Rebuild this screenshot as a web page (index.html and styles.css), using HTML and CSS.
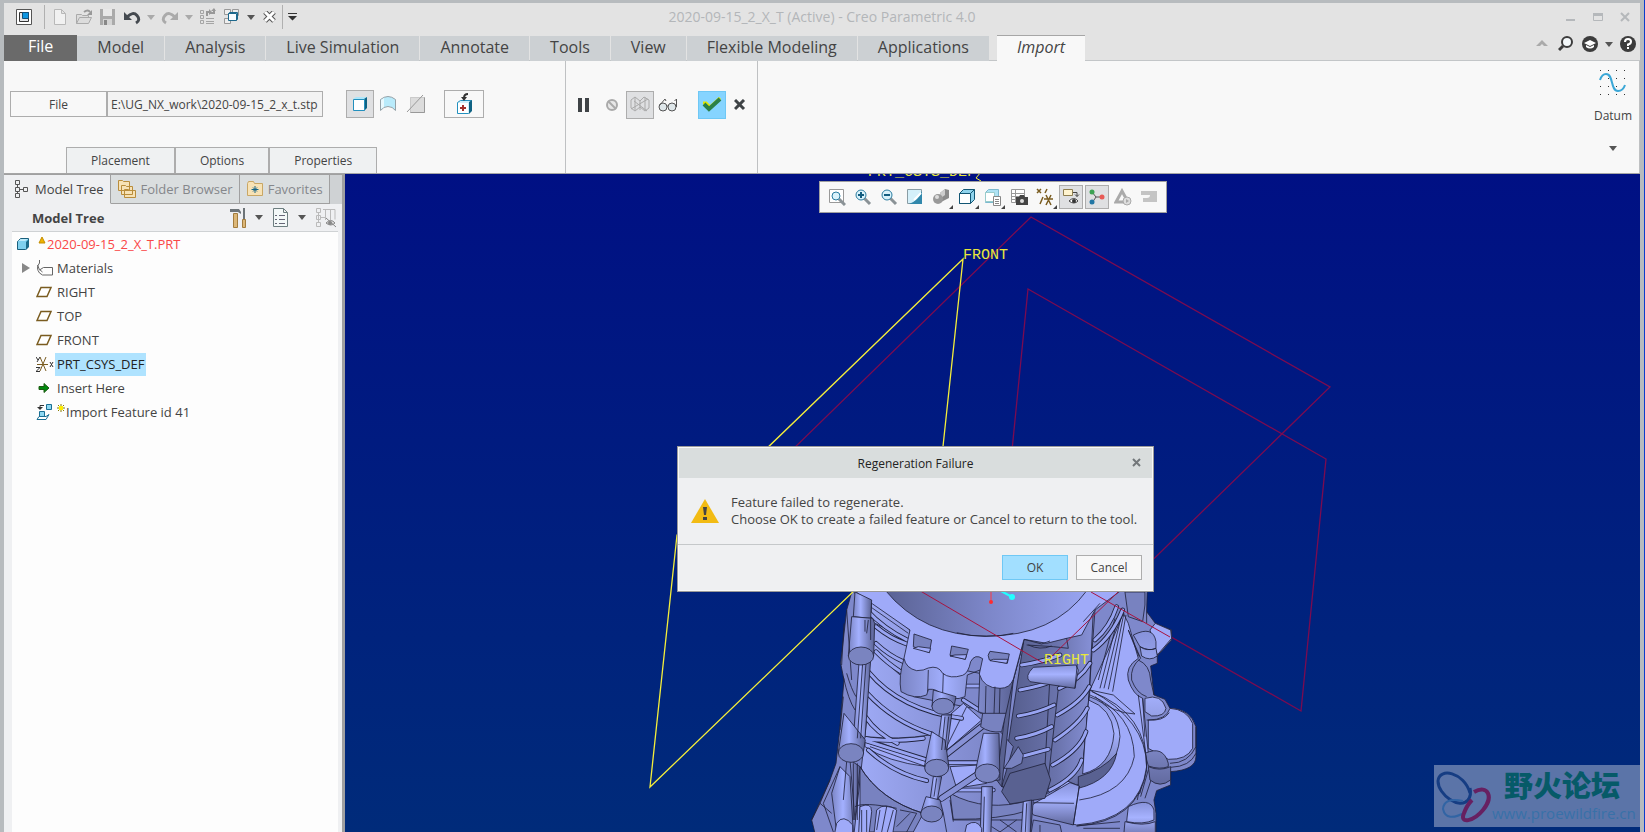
FILE: index.html
```
<!DOCTYPE html>
<html lang="en">
<head>
    <meta charset="utf-8">
    <title>2020-09-15_2_X_T (Active) - Creo Parametric 4.0</title>
    <link rel="stylesheet" href="styles.css">
</head>
<body>
<div class="app">

    <!-- Title bar -->
    <header class="titlebar">
        <div class="quick">
            <button class="q-app" aria-label="System menu"><svg width="16" height="16"><path fill="#fff" stroke="#555" d="M.5.5h15v15H.5z"/><path fill="#e4e6e8" stroke="#333" d="M3.500 3.500h9v9h-9z"/><path fill="#0d95e0" stroke="#124f78" d="M6.500 3.500h6v6h-6z"/></svg></button>
            <i class="sep"></i>
            <button aria-label="New"><svg width="16" height="18"><path fill="#f1f1f1" stroke="#b8b8b8" d="M2.500 1.500h7l4 4v11h-11zM9.500 1.500v4h4"/></svg></button>
            <button aria-label="Open"><svg width="18" height="18"><path fill="#dcdcdc" stroke="#aaa" d="M1.500 15.500v-9h5l1 1h6v2M1.500 15.500l3-6h12l-3 6z"/><path fill="none" stroke="#999" stroke-width="2" d="M9 4q4-3 6 0"/><path fill="#999" d="M17 2v5h-5z"/></svg></button>
            <button aria-label="Save"><svg width="18" height="18"><path fill="#aaa" d="M1 1h15v16H1z"/><path fill="#e8e8e8" d="M4 1h9v7H4z"/><path fill="#d4d4d4" d="M4 11h9v6H4z"/><path fill="#888" d="M5 12h3v5H5z"/></svg></button>
            <button aria-label="Undo"><svg width="18" height="16"><path fill="none" stroke="#454a50" stroke-width="3" d="M4 8q6-6 10-1.500t-1 7.500"/><path fill="#454a50" d="M1 3v8h8z"/></svg></button>
            <button class="arr" aria-label="Undo list"><svg width="8" height="5"><path fill="#aaa" d="M0 0h8L4 5z"/></svg></button>
            <button aria-label="Redo"><svg width="18" height="16"><path fill="none" stroke="#aaa" stroke-width="3" d="M14 8Q8 2 4 6.500t1 7.500"/><path fill="#aaa" d="M17 3v8H9z"/></svg></button>
            <button class="arr" aria-label="Redo list"><svg width="8" height="5"><path fill="#aaa" d="M0 0h8L4 5z"/></svg></button>
            <button aria-label="Regenerate"><svg width="18" height="18"><path fill="none" stroke="#a5a5a5" d="M1.500 2.500h3v3h-3zM1.500 7.500h3v3h-3zM1.500 12.500h3v3h-3zM7 10.500h8M7 13.500h8M7 15.500h8"/><path fill="none" stroke="#999" stroke-width="2" d="M8 8V4h3M15 1v4h-4"/><path fill="#999" d="M10 1l3 3-3 3zM12 3l5 0-2-3z"/></svg></button>
            <button aria-label="Windows"><svg width="18" height="18"><path fill="#eee" stroke="#999" d="M1.500 1.500h6v5h-6zM9.500 1.500h6v6h-6zM1.500 10.500h6v5h-6z"/><path fill="#f8fcff" stroke="#1d688c" d="M5.500 5.500h8v7h-8zM5.500 5.500l1-1h8v7l-1 1"/></svg></button>
            <button class="arr" aria-label="Window list"><svg width="8" height="5"><path fill="#555" d="M0 0h8L4 5z"/></svg></button>
            <button aria-label="Close"><svg width="14" height="12"><path fill="none" stroke="#555" stroke-width="5" d="M2 1l9 9M11 1L2 10"/><path fill="none" stroke="#fff" stroke-width="3" d="M2 1l9 9M11 1L2 10"/></svg></button>
            <i class="sep"></i>
            <button class="arr" aria-label="Customize"><svg width="10" height="8"><path fill="#333" d="M0 0h9v1H0zM0 3h9L4.500 7.500z"/></svg></button>
        </div>
        <h1>2020-09-15_2_X_T (Active) - Creo Parametric 4.0</h1>
        <div class="winctl">
            <button aria-label="Minimize"><svg width="12" height="12"><path fill="#b5b8bb" d="M1 8h9v2H1z"/></svg></button>
            <button aria-label="Maximize"><svg width="12" height="12"><path fill="none" stroke="#b5b8bb" d="M1.500 2.500h9v7h-9z"/><path fill="#b5b8bb" d="M1 2h10v3H1z"/></svg></button>
            <button aria-label="Close window"><svg width="12" height="12"><path stroke="#b5b8bb" stroke-width="2" d="M2 2l8 8M10 2l-8 8"/></svg></button>
        </div>
    </header>

    <nav class="tabs">
        <a class="file" href="#">File</a>
        <a href="#">Model</a>
        <a href="#">Analysis</a>
        <a href="#">Live Simulation</a>
        <a href="#">Annotate</a>
        <a href="#">Tools</a>
        <a href="#">View</a>
        <a href="#">Flexible Modeling</a>
        <a href="#">Applications</a>
        <a class="active" href="#">Import</a>
        <div class="help">
            <button aria-label="Collapse ribbon"><svg width="12" height="8"><path fill="#aaa" d="M0 6l6-6 6 6H8L6 4 4 6z"/></svg></button>
            <button aria-label="Search"><svg width="16" height="16"><circle cx="9" cy="6" r="5" fill="#f4f8fa" stroke="#3c3c3c" stroke-width="2"/><path stroke="#3c3c3c" stroke-width="3" d="M5 10l-4 4"/></svg></button>
            <button aria-label="Learning"><svg width="16" height="16"><circle cx="8" cy="8" r="8" fill="#3c3c3c"/><path fill="#fff" d="M2 7l6-3 6 3-6 3zM4 9l4 2 4-2v2q-4 3-8 0z"/></svg></button>
            <button class="arr" aria-label="Learning menu"><svg width="8" height="5"><path fill="#555" d="M0 0h8L4 5z"/></svg></button>
            <button aria-label="Help"><svg width="16" height="16"><circle cx="8" cy="8" r="8" fill="#3c3c3c"/><path fill="none" stroke="#fff" stroke-width="2" d="M5 6q0-3 3-3t3 2.500-3 3V10"/><path fill="#fff" d="M7 11h2v2H7z"/></svg></button>
        </div>
    </nav>

    <!-- Import dashboard -->
    <section class="ribbon">
        <div class="group source">
            <div class="row">
                <button class="filebtn" id="filebtn">File</button>
                <input type="text" aria-labelledby="filebtn" value="E:\UG_NX_work\2020-09-15_2_x_t.stp">
                <button class="tool on" aria-label="Solid"><svg width="18" height="18"><path fill="#aee6fa" d="M2 4l3-2h11v10l-3 3z"/><path fill="#0f6283" d="M13 4l3-2v11l-3 3z"/><path fill="#fff" stroke="#2390be" d="M2.500 4.500h11v11h-11z"/></svg></button>
                <button class="tool flat" aria-label="Surface"><svg width="18" height="18"><path fill="#b9ebfb" stroke="#96a2a8" d="M1.500 4.500q7.500-6 15 0v11q-3-4-7.500-4t-7.500 4z"/><path fill="#e9f9fe" d="M5 3v9l-3 2V5z"/></svg></button>
                <button class="tool flat" aria-label="Remove material"><svg width="20" height="20"><path fill="#dcdcdc" stroke="#aaa" stroke-dasharray="1 1" d="M4.500 3.500h14v15h-14z"/><path fill="none" stroke="#999" d="M1 18L17 1M4.500 18.500h14v-15"/></svg></button>
                <button class="tool wide" aria-label="Import geometry"><svg width="20" height="22"><path fill="#cfeffa" stroke="#2390be" d="M3.500 9.500l3-2h11v10l-3 3h-11z"/><path fill="#0f6283" d="M15 9l3-2v11l-3 3z"/><path fill="#fff" d="M4 10h10v10H4z"/><path fill="#a3302b" d="M8 12h2v2h2v2h-2v2H8v-2H6v-2h2z"/><path fill="none" stroke="#333" stroke-width="2" d="M10 5q0-4 4-4"/><path fill="#333" d="M7 4h6l-3 4z"/></svg></button>
            </div>
            <div class="subtabs">
                <button>Placement</button>
                <button>Options</button>
                <button>Properties</button>
            </div>
        </div>
        <div class="group actions">
            <button class="tool slim" aria-label="Pause"><svg width="12" height="14"><path fill="#3f4346" d="M0 0h4v14H0zM7 0h4v14H7z"/></svg></button>
            <button class="tool flat" aria-label="No preview"><svg width="14" height="14"><circle cx="7" cy="7" r="5" fill="#e8e8e8" stroke="#aaa" stroke-width="2"/><path stroke="#aaa" stroke-width="2" d="M3 3l8 8"/></svg></button>
            <button class="tool on" aria-label="Feature preview"><svg width="20" height="18"><path fill="none" stroke="#aaa" d="M1 4l4-3 5 4 4-4 5 3v8l-4 3-5-4-5 4-4-3zM5 1v13M10 5v9M15 1v13M1 13L18 3M4 5l13 10"/></svg></button>
            <button class="tool flat" aria-label="Verify"><svg width="20" height="14"><circle cx="5" cy="9" r="4" fill="#dfe7ea" stroke="#555"/><circle cx="14" cy="9" r="4" fill="#dfe7ea" stroke="#555"/><path fill="none" stroke="#555" d="M1 8l6-7 1 2M9 8h1M18.500 9V1l-2 2"/></svg></button>
            <button class="tool ok" aria-label="Accept"><svg width="20" height="16"><path fill="none" stroke="#e4e800" stroke-width="3" d="M1 6h3l4 4 10-9"/><path fill="none" stroke="#2b8049" stroke-width="4" d="M2 7l5 5L18 2"/></svg></button>
            <button class="tool slim" aria-label="Quit"><svg width="12" height="12"><path stroke="#3f4346" stroke-width="3" d="M1 1l9 9M10 1L1 10"/></svg></button>
        </div>
        <div class="group datum">
            <button>
                <svg width="28" height="28"><path stroke="#333" stroke-dasharray="1 7" d="M1 1.500h26M1 9.500h26M1 17.500h26M1 25.500h26"/><path fill="none" stroke="#3ba7d6" stroke-width="2" d="M1 11Q3 5 7 5c8 0 4 17 12 17q5 0 7-6"/></svg>
                <span>Datum</span>
                <svg width="8" height="5"><path fill="#555" d="M0 0h8L4 5z"/></svg>
            </button>
        </div>
    </section>

    <div class="work">
        <!-- Navigator -->
        <aside class="navigator">
            <div class="navtabs">
                <button class="active"><svg width="15" height="20"><path fill="none" stroke="#555" d="M1.500 1.500h4v4h-4zM1.500 8.500h4v4h-4zM1.500 14.500h4v4h-4zM9.500 8.500h4v4h-4zM3.500 5.500v3M3.500 12.500v2M5.500 10.500h4"/></svg>Model Tree</button>
                <button><svg width="20" height="20"><path fill="#f7e2b5" stroke="#b98d3c" d="M1.500 1.500h4l1 1h6v9h-11zM4.500 6.500h4l1 1h6v8h-11zM7.500 10.500h4l1 1h6v7h-11z"/></svg>Folder Browser</button>
                <button><svg width="18" height="18"><path fill="#f7e2b5" stroke="#c9a765" d="M1.500 3.500l1-2h5l1 2h8v12h-15z"/><path stroke="#146487" d="M9 6v7M5.500 9.500h7M7 7.500l4 4M11 7.500l-4 4"/></svg>Favorites</button>
            </div>
            <div class="navhead">
                <h2>Model Tree</h2>
                <button aria-label="Settings"><svg width="18" height="22"><path fill="#dcb778" stroke="#a37c3d" d="M4.500 6.500h4v14h-4zM13.500 12.500h3v8h-3z"/><path fill="#6d7478" d="M1 2h9l2 3v2l-3-2H1zM14 1h2v11h-2z"/></svg></button>
                <button class="arr" aria-label="Settings menu"><svg width="8" height="5"><path fill="#555" d="M0 0h8L4 5z"/></svg></button>
                <button aria-label="Display"><svg width="18" height="22"><path fill="#f3f8f8" stroke="#6d7e80" d="M1.500 1.500h10l4 4v14h-14zM11.500 1.500v4h4"/><path stroke="#667" d="M7 8.500h6M7 12.500h6M7 16.500h6M3 8.500h2M3 12.500h2M3 16.500h2"/></svg></button>
                <button class="arr" aria-label="Display menu"><svg width="8" height="5"><path fill="#555" d="M0 0h8L4 5z"/></svg></button>
                <button class="last" aria-label="Hide items"><svg width="22" height="22"><path fill="none" stroke="#bbb" d="M1.500 1.500h4v4h-4zM1.500 8.500h4v4h-4zM1.500 15.500h4v4h-4zM3.500 6v10M6 10.500h4M8 2.500h12v10M10.500 3v10M15.500 3v10"/><path fill="#ddd" stroke="#888" d="M11 16q5-5 9 0-4 4-9 0zM11 11l10 9"/><circle cx="15" cy="16" r="2" fill="#888"/></svg></button>
            </div>
            <ul class="tree">
                <li class="root"><svg class="icon" width="14" height="14"><path fill="#7fd0ee" stroke="#1a5f7c" d="M1.500 4.500l3-3h8v8l-3 3h-8z"/><path fill="#bdeafa" d="M2 4l3-2h7l-3 2z"/><path fill="#1b6b8a" d="M10 5l3-3v8l-3 3z"/></svg><svg class="badge" width="8" height="8"><path fill="#f0b400" stroke="#c48d00" d="M4 1l3 6H1z"/></svg>2020-09-15_2_X_T.PRT</li>
                <li><svg class="expand" width="8" height="10"><path fill="#888" d="M0 0l8 5-8 5z"/></svg><svg class="icon" width="18" height="18"><path fill="none" stroke="#666" d="M3.500 1v3q-4 5 0 10l3 2h10V8.500h-9L3.500 11M1.500 6q1 5 5 7"/></svg>Materials</li>
                <li><svg class="icon" width="18" height="12"><path fill="#fff" stroke="#7a5c20" stroke-width="1.500" d="M5 1.500h10l-4 9H1z"/></svg>RIGHT</li>
                <li><svg class="icon" width="18" height="12"><path fill="#fff" stroke="#7a5c20" stroke-width="1.500" d="M5 1.500h10l-4 9H1z"/></svg>TOP</li>
                <li><svg class="icon" width="18" height="12"><path fill="#fff" stroke="#7a5c20" stroke-width="1.500" d="M5 1.500h10l-4 9H1z"/></svg>FRONT</li>
                <li><svg class="icon" width="18" height="18"><path fill="none" stroke="#7a5c20" d="M1 9.500h11M4 2l6 14M10 2L4 16"/><path fill="none" stroke="#333" d="M0 2l2 3M4 2L1 7M0 12.500h4l-4 4h4M14 7l3 5M17 7l-3 5"/></svg><span class="sel">PRT_CSYS_DEF</span></li>
                <li><svg class="icon" width="18" height="12"><path fill="#008a0e" stroke="#1c5a12" d="M3 4.500h5v-3l5 4.500-5 4.500v-3H3z"/></svg>Insert Here</li>
                <li><svg class="icon" width="18" height="18"><path fill="#8ed8f2" stroke="#1a6f94" d="M10.500 1.500h5v5h-5zM3.500 8.500h5v5h-5z"/><path fill="#fff" stroke="#1a6f94" d="M1 16.500l2-3h7l3-2-3 5z"/><path fill="none" stroke="#333" d="M8 2.500H4v3"/><path fill="#333" d="M1 4h6L4 7z"/></svg><svg class="badge" width="8" height="8"><path stroke="#8a7d00" d="M4 0v8M0 4h8M1 1l6 6M7 1L1 7"/><path fill="#ffee00" d="M2 2h4v4H2z"/></svg>Import Feature id 41</li>
            </ul>
        </aside>

        <!-- Graphics area -->
        <main class="viewport">
            <svg class="scene" viewBox="345 174 1295 658" preserveAspectRatio="xMidYMid slice">
                <defs>
                    <linearGradient id="bore"><stop offset="0" stop-color="#5a6294"/><stop offset=".5" stop-color="#7c86c8"/><stop offset="1" stop-color="#98a4f0"/></linearGradient>
                    <linearGradient id="tube"><stop offset="0" stop-color="#7a84c4"/><stop offset=".4" stop-color="#a3b0ff"/><stop offset="1" stop-color="#5a6294"/></linearGradient>
                    <linearGradient id="barrel"><stop offset="0" stop-color="#a0acf8"/><stop offset="1" stop-color="#727bba"/></linearGradient>
                    <linearGradient id="side"><stop offset="0" stop-color="#525a88"/><stop offset=".6" stop-color="#6a73ac"/><stop offset="1" stop-color="#8791d8"/></linearGradient>
                    <linearGradient id="boss" x2="0" y2="1"><stop offset="0" stop-color="#8792da"/><stop offset=".4" stop-color="#a6b2ff"/><stop offset="1" stop-color="#626a9f"/></linearGradient>
                    <path class="bar" id="ribs-left" d="M200 90Q250 145 325 182M228 140Q270 175 320 192M228 190Q265 225 310 245M228 215Q262 250 302 275M205 275Q300 390 485 415M202 340Q280 425 395 462M196 410Q230 460 292 490M195 475Q260 488 370 475M205 510Q280 580 380 602M190 480L375 538M440 548H530M470 630H580M490 360L545 395M500 318H550"/>
                    <path class="bar" id="ribs-right" d="M665 255Q730 245 780 225M660 330Q725 318 752 305M655 408Q715 398 762 375M650 475Q710 465 755 440M670 528L745 508M778 325Q840 300 870 250M772 405Q845 365 868 320M765 480Q840 430 862 385M758 555Q840 510 858 455M750 630Q830 590 845 540M885 180Q930 140 950 80M880 210Q935 170 968 90"/>
                    <path class="bar" id="struts" d="M545 440L430 530M545 575L425 655"/>
                </defs>
                <g class="csys">
                    <text x="868" y="176">PRT_CSYS_DEF</text>
                    <path d="M975 172h6l-5 6 5 3"/>
                </g>
                <path class="plane-r" d="M1031 217L1330 387 1047 663 748 493zM1028 289L1326 459 1301 711 1003 541z"/>

                <!-- imported casting -->
                <g class="part" transform="translate(800 580) scale(.3333)">
                    <path class="base" d="M160 20L140 90 122 250 132 300 118 460 108 550 90 600 35 720 50 780H1068V700L1062 660 1070 632 1112 615V575Q1188 570 1188 530V440Q1170 385 1110 385L1095 358 1062 345 1052 258 1072 250V228L1115 180V150L1066 130 1040 95 1042 20z"/>
                    <!-- pads and bosses on the right -->
                    <path class="lite" d="M1050 150L1066 130 1112 150 1115 175 1072 225zM1045 420Q1100 420 1110 385 1160 388 1178 430V505Q1160 540 1105 538L1045 505z"/>
                    <path class="line" d="M1188 440V500Q1165 550 1110 550M1188 520Q1170 560 1112 562"/>
                    <path class="mid" d="M975 36H1035V75L1028 125 985 110z"/>
                    <path class="lite" d="M985 130L1015 235Q975 260 985 300 1000 345 1028 355L1045 520 1020 640H900L870 330 925 210 970 100z"/>
                    <path class="line" d="M985 150L1022 235Q990 260 995 300 1010 340 1040 350M1015 240Q1050 255 1052 300L1062 345M1028 355L1035 470M1015 345L1040 540M965 105L912 325M955 110L900 325M945 115L895 300M972 100L925 328M978 105L938 335M985 150Q1000 190 1018 230M1040 420Q1090 425 1108 398M1040 95V130M1030 570L1012 660M1045 570L1022 650M1060 580L1035 655"/>
                    <path fill="url(#boss)" d="M1000 165Q1060 135 1068 185V205Q1040 215 1020 200zM1020 200Q1050 215 1068 205L1072 228Q1050 245 1025 228zM1035 355Q1085 340 1098 385 1095 410 1055 408L1035 395zM1035 520Q1090 495 1105 550V560Q1080 570 1045 558zM1045 560Q1080 575 1112 560V600Q1080 625 1050 600z"/>
                    <!-- side barrel -->
                    <path fill="url(#side)" d="M672 178L800 175 880 90 868 340 850 560 745 640 605 620z"/>
                    <path class="line" d="M885 90L868 330 852 540M778 300L740 640M750 290L735 560"/>
                    <!-- round cover -->
                    <path class="lite" d="M870 330Q1040 420 1040 560 1020 720 830 735L700 700 800 600 850 540z"/>
                    <path fill="url(#boss)" d="M868 350Q955 380 960 470 950 590 830 615L795 600 850 545z"/>
                    <path class="lite" d="M866 360Q935 385 942 460 935 560 848 582L855 480z"/>
                    <path class="line" d="M870 345Q1000 400 1003 530 980 640 838 660M875 335Q1045 400 1040 570 1015 725 830 738M870 330L940 345 1005 402Q940 400 885 350"/>
                    <path class="dark" d="M835 590Q910 570 950 520 935 600 835 625z"/>
                    <path fill="url(#boss)" d="M985 680Q1050 650 1062 690V720Q1030 735 980 725zM975 725Q1030 740 1066 725V780H970z"/>
                    <path fill="url(#boss)" d="M700 672L810 608 838 618 820 735 700 705Q688 690 700 672z"/>
                    <path class="line" d="M838 618L820 735M700 668L822 670"/>
                    <!-- main barrel -->
                    <path fill="url(#barrel)" d="M215 60L330 150 340 350 545 390 640 500 605 620 700 660 690 780H160L200 420z"/>
                    <path class="lite" d="M195 470L375 540 380 560Q260 545 195 500zM450 560L540 555 560 610 470 625zM490 370L545 420 430 520 455 400z"/>
                    <path class="mid" d="M180 560Q240 660 370 700L340 756H180zM450 640Q560 700 690 660V720H460z"/>
                    <path class="line" d="M180 560Q240 660 370 700M460 718Q600 720 690 690M225 130L330 180M228 220L300 285M195 470Q300 480 390 465M210 500L378 560M455 400L430 520M500 380L430 520M450 660L460 725"/>
                    <use href="#ribs-left" class="rib-edge"/><use href="#ribs-left" class="rib"/>
                    <use href="#ribs-right" class="rib-edge"/><use href="#ribs-right" class="rib"/>
                    <use href="#struts" class="strut-edge"/><use href="#struts" class="strut"/>
                    <path class="dark" d="M630 580L735 550 752 600 735 655 630 672 605 635z"/>
                    <path class="dark" d="M672 178L640 300 605 620 590 600 625 325 640 300z"/>
                    <path class="mid" d="M655 500L670 525 665 550 635 565 612 565z"/>
                    <!-- flange with bore -->
                    <path fill="url(#tube)" d="M312 235Q295 290 303 335 345 360 380 345L385 328Q410 325 425 345 460 365 495 350L502 285 540 270 535 395Q580 415 618 400L640 300z"/>
                    <path class="lite" d="M160 30L218 72 330 150 312 235Q318 265 350 272 372 272 385 264 415 255 428 280 450 298 488 286 505 280 512 245 525 220 548 236L538 282Q550 325 600 325 630 325 640 298L672 178 740 190 800 175 845 165 885 90 965 30z"/>
                    <path fill="url(#bore)" class="bore" d="M255 30Q370 170 560 168 760 170 862 30z"/>
                    <path class="line" d="M470 158Q555 180 640 160M585 320L582 405M558 318L556 400M385 270L383 335M430 280L428 340M600 325L598 405M160 36L218 85 325 160M672 178L725 192 750 183M800 175L805 205 760 200 680 195M850 125L900 70M685 195Q720 212 755 198"/>
                    <path class="mid" d="M342 162L395 180 388 218 340 200zM455 198L505 208 496 238 450 226zM570 214L628 222 622 250 568 240Q560 225 570 214z"/>
                    <path class="lite" d="M355 200L392 205 388 218 340 205zM465 225L500 224 496 238 450 228zM580 238L624 238 620 250 570 242z"/>
                    <!-- bolt columns -->
                    <path fill="url(#tube)" d="M165 36L215 60 212 115 160 110z"/>
                    <path fill="url(#tube)" d="M155 110L145 228H221L224 130 218 115z"/>
                    <path fill="url(#tube)" d="M177 250L160 475H195L212 240z"/>
                    <path fill="url(#tube)" d="M132 400L115 518H190L196 480z"/>
                    <path fill="url(#tube)" d="M150 540L165 720 180 560zM120 560L95 640 110 756 160 756 150 590z"/>
                    <path fill="url(#tube)" d="M425 405L412 505 440 515 455 405z"/>
                    <path fill="url(#tube)" d="M400 330L396 380H462L468 350z"/>
                    <path fill="url(#tube)" d="M395 455L373 560H447L435 480z"/>
                    <path fill="url(#tube)" d="M400 590L390 660H412L425 590z"/>
                    <path fill="url(#tube)" d="M378 650L362 700H430L420 660z"/>
                    <path fill="url(#tube)" d="M550 460L526 575Q560 610 600 600L597 460z"/>
                    <path class="mid" d="M548 400L542 440Q570 460 605 455L618 400z"/>
                    <path fill="url(#tube)" d="M670 665L662 780H690L695 660z"/>
                    <path fill="url(#tube)" d="M545 620L540 780H572L578 620z"/>
                    <path class="line" d="M205 120L200 160M212 115V180M195 120V155M188 250L172 475M198 250L182 475M140 90L155 300M132 130L125 255M130 290Q145 360 165 390M140 280Q155 330 168 350M130 350L120 450M140 545L130 660M160 550V720M172 550V720M435 410L425 510M446 410L435 510M410 595L402 650M553 650L550 756M680 670L676 756M120 560L70 670 100 756M90 600L60 670M60 670L95 700M35 720L60 670"/>
                    <g class="caps">
                        <ellipse cx="183" cy="228" rx="38" ry="27"/>
                        <ellipse cx="153" cy="519" rx="38" ry="28"/>
                        <ellipse cx="429" cy="379" rx="33" ry="24"/>
                        <ellipse cx="410" cy="564" rx="36" ry="26"/>
                        <ellipse cx="395" cy="702" rx="33" ry="24"/>
                        <ellipse cx="562" cy="580" rx="37" ry="28"/>
                    </g>
                    <!-- lower bosses -->
                    <path class="lite" d="M110 730Q130 700 158 735V780H100zM180 680Q215 665 215 695L205 780H175zM230 690Q255 665 290 690L275 780H220zM500 735Q530 715 545 745V780H490z"/>
                    <path class="mid" d="M700 720L780 735 790 780H690z"/>
                    <path class="line" d="M185 690V756M200 690V756M240 690L230 750M260 680L245 756M280 690L262 756M300 690L350 700 320 756M290 740L330 700M165 680Q190 665 290 685M430 700L440 756M575 740L600 756M600 720L650 756M650 720L600 756M720 735V756M830 738L960 725M850 745H960"/>
                    <!-- boss beside the RIGHT label -->
                    <path fill="url(#boss)" d="M700 262L828 255 835 270 825 325 690 305Q672 290 700 262z"/>
                    <path class="line" d="M832 250L825 325"/>
                </g>

                <!-- datum planes -->
                <path class="plane-y" d="M963 259L677 535 650 787 936 512z"/>
                <path class="plane-hot" d="M917 589L1043 663M1050 658L1118 592M1091 592L1170 637"/>
                <path stroke="#ff3b40" d="M991 580v22"/><circle cx="991" cy="602" r="2" fill="#ff2b30"/>
                <path stroke="#2ff" stroke-width="2" d="M990 585l22 12"/><circle cx="1012" cy="597" r="3" fill="#2ff"/>
                <g class="csys"><text x="963" y="259">FRONT</text><text x="1044" y="664">RIGHT</text></g>
            </svg>

            <div class="viewbar">
                <button aria-label="Refit"><svg width="18" height="18"><path fill="#fff" stroke="#999" d="M1.500 1.500h14v13h-14z"/><path stroke="#8a9296" stroke-width="3" d="M11 11l6 6"/><circle cx="8" cy="8" r="4" fill="#d9f2fb" stroke="#2a7ca0"/></svg></button>
                <button aria-label="Zoom in"><svg width="18" height="18"><path stroke="#8a9296" stroke-width="3" d="M10 10l6 6"/><circle cx="7" cy="7" r="5" fill="#d9f2fb" stroke="#2a7ca0"/><path stroke="#125d80" stroke-width="2" d="M4 7h6M7 4v6"/></svg></button>
                <button aria-label="Zoom out"><svg width="18" height="18"><path stroke="#8a9296" stroke-width="3" d="M10 10l6 6"/><circle cx="7" cy="7" r="5" fill="#d9f2fb" stroke="#2a7ca0"/><path stroke="#125d80" stroke-width="2" d="M4 7h6"/></svg></button>
                <button aria-label="Repaint"><svg width="18" height="18"><path fill="#d5f0fa" stroke="#8a9da5" d="M1.500 1.500h14v14h-14z"/><path fill="#3188ac" d="M16 3v13H3q9-3 13-13z"/><path stroke="#fff" stroke-width="2" d="M8 12l7-7"/></svg></button>
                <button class="more" aria-label="Display style"><svg width="18" height="18"><path fill="#8a8a8a" d="M8 5l5-4 4 1v8l-8 4z"/><path fill="#ccc" d="M8 5l5-4v6l-4 3z"/><circle cx="6" cy="11" r="5" fill="#999"/><circle cx="5" cy="9" r="2" fill="#ddd"/></svg></button>
                <button class="more" aria-label="Saved orientations"><svg width="18" height="18"><path fill="#8fd3ec" stroke="#125674" d="M1.500 5.500l4-4h11v10l-4 4h-11zM12.500 5.500l4-4"/><path fill="#fff" stroke="#125674" d="M1.500 5.500h11v10h-11z"/></svg></button>
                <button class="more" aria-label="View manager"><svg width="18" height="18"><path fill="#aee2f4" stroke="#7cb9cf" d="M1.500 4.500l3-3h10v10l-3 3h-10z"/><path fill="#fff" stroke="#9cc" d="M1.500 4.500h9v9h-9z"/><path fill="#fff" stroke="#888" d="M9.500 8.500h7v9h-7zM11 11.500h4M11 13.500h4M11 15.500h4"/></svg></button>
                <button aria-label="Capture"><svg width="18" height="18"><path fill="#fff" stroke="#999" d="M1.500 1.500h13v13h-13zM1.500 5.500h13M5.500 1.500v13M1.500 8.500h13M1.500 11.500h13"/><path fill="#444" d="M6 9h3l1-2h4l1 2h3v8H6z"/><circle cx="12" cy="13" r="2" fill="#ddd"/></svg></button>
                <button class="more" aria-label="Datum display"><svg width="18" height="18"><path fill="none" stroke="#7a5c20" stroke-width="1.500" d="M1 1l4 4M5 1L1 5M11 1L9 5M7 9l-3 7M8 11h9M10 7l5 10M15 7l-5 10"/></svg></button>
                <button class="on" aria-label="Annotation display"><svg width="18" height="18"><path fill="#fff4cf" stroke="#8f7f50" d="M1.500 1.500h9v6h-9z"/><path fill="none" stroke="#444" d="M11 4.500h4v4M13 6.500l2 2 2-2"/><path fill="#fff" stroke="#444" d="M7 13q5-5 9 0-4 4-9 0z"/><circle cx="12" cy="13" r="2" fill="#333"/></svg></button>
                <button class="on" aria-label="Spin center"><svg width="18" height="18"><path fill="none" stroke="#555" d="M4 4l4 5-4 6M8 9h7"/><circle cx="4" cy="4" r="2.500" fill="#3da254"/><circle cx="4" cy="14" r="2.500" fill="#2277a5"/><circle cx="14" cy="9" r="2.500" fill="#e85a55"/></svg></button>
                <button aria-label="Simulate"><svg width="18" height="18"><path fill="none" stroke="#aaa" stroke-width="3" d="M8 3l6 11H2z"/><circle cx="13" cy="13" r="4" fill="#ddd" stroke="#aaa"/><path fill="#aaa" d="M12 11l3 2-3 2z"/></svg></button>
                <button aria-label="Clip"><svg width="18" height="18"><path fill="#c4c4c4" d="M1 3h16v11H3v-4h4q3 0 3-3H1z"/></svg></button>
            </div>

            <div class="watermark">
                <svg width="58" height="58" viewBox="0 0 58 58"><path fill="none" stroke="#163d83" stroke-width="3" d="M36 25C30 4 5-1 4 13c0 14 22 29 30 19 3-4 3-8 2-12"/><path fill="none" stroke="#3164a4" stroke-width="2" d="M29 33q-19-4-20 8 3 14 23 3"/><path fill="none" stroke="#672061" stroke-width="4" d="M40 24c14-8 20 5 9 18-9 11-24 15-19 3q3-8 8-13"/></svg>
                <div><strong>野火论坛</strong><span>www.proewildfire.cn</span></div>
            </div>

            <div class="dialog" role="dialog" aria-labelledby="dlg-title">
                <div class="dlg-title"><h3 id="dlg-title">Regeneration Failure</h3><button aria-label="Close"><svg width="10" height="10"><path stroke="#73777a" stroke-width="2" d="M1 1l7 7M8 1L1 8"/></svg></button></div>
                <div class="dlg-body">
                    <svg width="28" height="24"><path fill="#f2bb14" d="M14 0l14 24H0z"/><path fill="#444" d="M12 8h4l-1 8h-2zM12 18h4v3h-4z"/></svg>
                    <p>Feature failed to regenerate.<br>Choose OK to create a failed feature or Cancel to return to the tool.</p>
                </div>
                <div class="dlg-foot"><button class="primary">OK</button><button>Cancel</button></div>
            </div>
        </main>
    </div>
</div>
</body>
</html>
```

FILE: styles.css
```
* {
    box-sizing: border-box;
}

body {
    margin: 0;
    background: #0a3ccc;
    color: #444;
    font-family: "Open Sans", "Noto Sans CJK SC", sans-serif;
    font-size: 12px;
}

h1, h2, h3, p, ul {
    margin: 0;
    padding: 0;
}

button {
    padding: 0;
    border: 0;
    background: none;
    color: inherit;
    font: inherit;
}

a {
    color: inherit;
    text-decoration: none;
}

svg {
    display: block;
    flex: none;
}

.app {
    display: flex;
    flex-direction: column;
    height: 100vh;
    margin-right: 1px;
    border: solid #b7bbbe;
    border-width: 3px 4px 0;
    background: #e3e3e3;
    overflow: hidden;
}

/* Title bar */
.titlebar {
    display: grid;
    grid-template-columns: 1fr auto 1fr;
    height: 32px;
    align-items: start;
}

.titlebar h1 {
    color: #b3b6b9;
    font-size: 14px;
    font-weight: normal;
    line-height: 28px;
}

.quick, .winctl, .help {
    display: flex;
    align-items: center;
    height: 28px;
}

.quick button, .winctl button, .help button, .navhead button {
    display: flex;
    justify-content: center;
    align-items: center;
    width: 24px;
}

.quick button.arr, .help button.arr, .navhead button.arr {
    width: 14px;
}

.quick .q-app {
    width: 40px;
}

.sep {
    width: 1px;
    height: 24px;
    margin-right: 3px;
    background: #b0b0b0;
}

.winctl {
    justify-content: flex-end;
    padding-right: 2px;
}

.winctl button {
    width: 27px;
}

/* Ribbon tabs */
.tabs {
    display: flex;
    align-items: stretch;
    height: 26px;
    box-shadow: inset 0 -1px #c3c6c8;
}

.tabs a {
    margin: 1px 1px 0 0;
    padding: 0 20px;
    background: #ccd0d3;
    font-size: 16px;
    line-height: 23px;
}

.tabs .file {
    margin: 0;
    padding: 0 24px;
    background: #6a6a6a;
    color: #fff;
}

.tabs .active {
    margin: 0 0 0 7px;
    border-top: 1px solid #a6a6a6;
    background: #f8f8f8;
    font-style: italic;
}

.help {
    margin-left: auto;
    height: 18px;
}

/* Import dashboard */
.ribbon {
    display: flex;
    height: 113px;
    border-bottom: 1px solid #a6a6a6;
    background: #f8f8f8;
}

.group {
    border-right: 1px solid #bfc1c3;
}

.source {
    display: flex;
    flex-direction: column;
    justify-content: space-between;
    width: 562px;
    padding: 29px 0 0 6px;
}

.row {
    display: flex;
    align-items: center;
}

.filebtn {
    width: 97px;
    height: 26px;
    border: 1px solid #adadad;
}

.row input {
    width: 216px;
    height: 26px;
    margin-right: 23px;
    padding: 0 3px;
    border: 1px solid #adadad;
    background: #f3f3f3;
    color: inherit;
    font: inherit;
}

.tool {
    display: flex;
    align-items: center;
    justify-content: center;
    width: 28px;
    height: 28px;
    border: 1px solid transparent;
}

.tool.on, .viewbar .on {
    border: 1px solid #adadad;
    background: #dfe0e2;
}

.tool.wide {
    width: 40px;
    margin-left: 14px;
    border-color: #adadad;
}

.tool.ok {
    margin-left: 16px;
    border-color: #6fc8f5;
    background: #86d4ff;
}

.subtabs {
    display: flex;
    padding-left: 56px;
}

.subtabs button {
    height: 26px;
    padding: 0 24px;
    border: 1px solid #adadad;
    border-bottom: 0;
    background: #eff1f2;
}

.actions {
    display: flex;
    width: 192px;
    padding: 30px 0 0 4px;
}

.datum {
    flex: 1;
    display: flex;
    justify-content: flex-end;
}

.datum button {
    display: flex;
    flex-direction: column;
    align-items: center;
    width: 52px;
    padding-top: 8px;
}

.datum span {
    margin: 10px 0 22px;
}

.work {
    flex: 1;
    display: flex;
    min-height: 0;
}

/* Navigator */
.navigator {
    display: flex;
    flex-direction: column;
    width: 341px;
    border-right: 3px solid #a0a0a0;
    background: #eff0f2;
}

.navtabs {
    display: flex;
    height: 30px;
    border-top: 1px solid #a0a0a0;
    background: #cfd2d4;
}

.navtabs button {
    display: flex;
    align-items: center;
    gap: 4px;
    padding: 0 6px;
    border: solid #a0a0a0;
    border-width: 0 1px 1px 0;
    background: #dadedf;
    color: #85878b;
    font-size: 13px;
}

.navtabs .active {
    gap: 6px;
    padding-left: 10px;
    border-bottom-color: #eff0f2;
    background: #eff0f2;
    color: #444;
}

.navhead {
    display: flex;
    align-items: center;
    height: 27px;
    padding-left: 28px;
}

.navhead h2 {
    flex: 1;
    font-size: 13px;
}

.navhead button {
    width: 27px;
}

.navhead button.arr {
    width: 16px;
}

.navhead .last {
    width: 32px;
}

.tree {
    flex: 1;
    margin: 0 4px 0 8px;
    border-top: 1px solid #cfd2d4;
    background: #fdfdfd;
    list-style: none;
}

.tree li {
    display: flex;
    position: relative;
    align-items: center;
    height: 24px;
    padding-left: 24px;
    font-size: 13px;
}

.tree .icon {
    margin-right: 3px;
}

.tree .root {
    padding-left: 4px;
    color: #fa4848;
}

.tree .root .icon {
    margin-right: 8px;
}

.expand {
    position: absolute;
    left: 10px;
}

.badge {
    margin: 0 1px 8px 0;
}

.sel {
    margin-left: -2px;
    padding: 0 2px;
    background: #afe3ff;
    color: #222;
    line-height: 23px;
}

/* Graphics area */
.viewport {
    flex: 1;
    position: relative;
    background: linear-gradient(#001084, #002b7a);
    overflow: hidden;
}

.scene {
    width: 100%;
    height: 100%;
}

.csys text {
    fill: #e8e83c;
    font: 15px "Liberation Mono", monospace;
}

.csys path, .plane-y {
    fill: none;
    stroke: #f4ee3a;
}

.plane-y, .plane-r {
    fill: none;
    stroke-width: 1.3;
}

.plane-r {
    stroke: #7b0b50;
}

.plane-hot {
    fill: none;
    stroke: #a81440;
}

.part path, .caps ellipse {
    stroke: #20233c;
    stroke-width: 2.5;
    stroke-linejoin: round;
}

.part .base {
    fill: #7e88cb;
}

.part .lite {
    fill: #9faaf9;
}

.part .mid {
    fill: #7882c0;
}

.part .dark {
    fill: #596191;
}

.part .line {
    fill: none;
}

.caps ellipse {
    fill: #7a84c0;
}

.bar {
    fill: none;
    stroke-linecap: round;
}

.rib-edge {
    stroke: #20233c;
    stroke-width: 14px;
}

.rib {
    stroke: #98a4f2;
    stroke-width: 9px;
}

.strut-edge {
    stroke: #20233c;
    stroke-width: 20px;
}

.strut {
    stroke: #8791d6;
    stroke-width: 15px;
}

.viewbar {
    position: absolute;
    top: 7px;
    left: 50%;
    display: flex;
    align-items: center;
    gap: 2px;
    height: 32px;
    padding: 0 5px;
    border: 1px solid #a0a0a0;
    background: #f8f8f8;
    transform: translateX(-50%);
}

.viewbar button {
    position: relative;
    display: flex;
    align-items: center;
    justify-content: center;
    width: 24px;
    height: 24px;
    border: 1px solid transparent;
}

.viewbar .more::after {
    position: absolute;
    right: -1px;
    bottom: -1px;
    border: solid transparent;
    border-width: 2px;
    border-right-color: #444;
    border-bottom-color: #444;
    content: "";
}

.watermark {
    position: absolute;
    right: 0;
    bottom: 5px;
    display: flex;
    width: 206px;
    height: 62px;
    background: #5b74a8;
}

.watermark svg {
    margin-top: 3px;
}

.watermark strong {
    display: block;
    padding-left: 12px;
    color: #065a68;
    font: 900 29px/39px "Noto Sans CJK SC", sans-serif;
}

.watermark span {
    display: block;
    color: #3871a8;
    font-size: 15px;
    line-height: 18px;
}

/* Failure message */
.dialog {
    position: absolute;
    top: 272px;
    left: 332px;
    width: 477px;
    border: 1px solid #9a9a9a;
    background: #eff0f2;
    box-shadow: inset 0 0 0 1px #f8f8f8;
}

.dlg-title {
    display: flex;
    align-items: center;
    height: 30px;
    margin: 1px 1px 0;
    padding: 0 10px 0 20px;
    background: #d9dddd;
    color: #222;
}

.dlg-title h3 {
    flex: 1;
    font-size: 12px;
    font-weight: normal;
    text-align: center;
}

.dlg-body {
    display: flex;
    align-items: center;
    gap: 12px;
    height: 67px;
    padding: 0 13px;
    border-bottom: 1px solid #c5c8ca;
    font-size: 13px;
    line-height: 17px;
}

.dlg-foot {
    display: flex;
    justify-content: flex-end;
    gap: 8px;
    padding: 10px 11px 11px;
}

.dlg-foot button {
    width: 66px;
    height: 25px;
    border: 1px solid #adadad;
    background: #f8f8f8;
}

.dlg-foot .primary {
    border-color: #6fc8f5;
    background: #a2dfff;
}
```
